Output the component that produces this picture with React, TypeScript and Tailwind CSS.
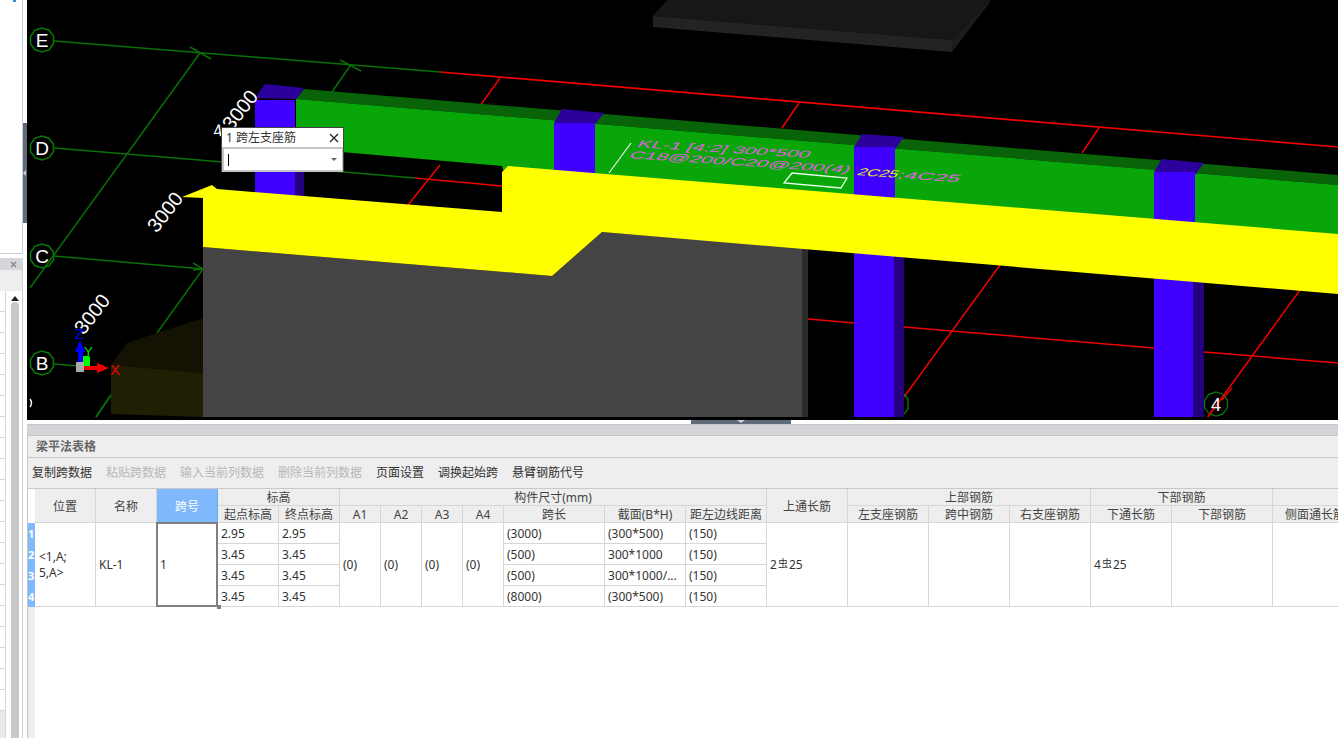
import React from "react";

const poly = (cx: number, cy: number, r: number, n = 10) =>
  Array.from({ length: n }, (_, i) => {
    const a = (i * 2 * Math.PI) / n + 0.3;
    return `${(cx + r * Math.cos(a)).toFixed(1)},${(cy + r * Math.sin(a)).toFixed(1)}`;
  }).join(" ");

const GREEN = "#087008";
const RED = "#f00000";

function Axis({ x, y, label }: { x: number; y: number; label: string }) {
  return (
    <g>
      <polygon points={poly(x, y, 12)} fill="none" stroke="#087808" strokeWidth="1.5" />
      <text x={x} y={y + 7} fill="#fff" fontSize="19" textAnchor="middle" fontFamily="Liberation Sans">
        {label}
      </text>
    </g>
  );
}

function Dim({ x, y }: { x: number; y: number }) {
  return (
    <text
      x={x}
      y={y}
      fill="#fff"
      fontSize="20"
      textAnchor="middle"
      dominantBaseline="central"
      fontFamily="Liberation Sans"
      transform={`rotate(-52 ${x} ${y})`}
    >
      3000
    </text>
  );
}

function Scene() {
  return (
    <svg width="1311" height="420" viewBox="27 0 1311 420" className="block">
      <rect x="27" y="0" width="1311" height="420" fill="#000" />
      {/* slab at the top */}
      <polygon points="667,0 990,0 952,40 653,16" fill="#171717" />
      <polygon points="653,16 952,40 952,52 653,27" fill="#232323" />
      <polygon points="952,40 990,0 990,2 952,52" fill="#1c1c1c" />

      {/* grid lines */}
      <g fill="none" strokeWidth="1.5">
        <path d="M54 41L440 72" stroke={GREEN} />
        <path d="M440 72L1338 147" stroke={RED} strokeWidth="1.7" />
        <path d="M30 288L200 53M190 47L211 59" stroke={GREEN} />
        <path d="M332 92L350 66M340 60L361 71" stroke={GREEN} />
        <path d="M54 148L415 178" stroke={GREEN} />
        <path d="M415 178L502 186" stroke={RED} />
        <path d="M54 256L203 269M193 263L203 269L193 270" stroke={GREEN} />
        <path d="M203 269L157 333M111 395L96 417" stroke={GREEN} />
        <path d="M54 364L78 366" stroke={GREEN} />
        <path d="M500 78L480 106M440 165L408 205" stroke={RED} />
        <path d="M799 103L782 128M1099 128L1082 153" stroke={RED} />
        <path d="M808 319L854 323M904 327L1154 348M1204 352L1338 363" stroke={RED} />
        <path d="M1000 265L904 397M1300 290L1208 417" stroke={RED} />
      </g>

      {/* olive block behind the wall */}
      <polygon points="111,365 127,343 157,333 203,318 203,373" fill="#141303" />
      <polygon points="111,365 203,373 203,417 111,414" fill="#201f03" />
      <path d="M111 395L96 417" stroke={GREEN} strokeWidth="1.5" />

      {/* lower columns */}
      <rect x="854" y="180" width="40" height="237" fill="#4000ff" />
      <rect x="894" y="180" width="10" height="237" fill="#25007f" />
      <rect x="1154" y="200" width="39" height="217" fill="#4000ff" />
      <rect x="1193" y="200" width="11" height="217" fill="#25007f" />
      <rect x="255" y="100" width="40" height="100" fill="#4000ff" />
      <rect x="295" y="140" width="9" height="60" fill="#25007f" />

      {/* beam */}
      <polygon points="296,99 304,89 1338,175 1338,185" fill="#096409" />
      <polygon points="296,99 1338,185 1338,260 508,185 502,166 296,148" fill="#08a608" />

      {/* column heads over the beam */}
      <polygon points="255,98 265,84 304,88 296,99" fill="#2b009b" />
      <polygon points="554,123 562,109 604,113 595,124" fill="#2b009b" />
      <rect x="554" y="123" width="41" height="60" fill="#4000ff" />
      <polygon points="854,147 862,134 904,137 895,149" fill="#2b009b" />
      <rect x="854" y="147" width="41" height="60" fill="#4000ff" />
      <polygon points="1154,172 1162,159 1204,163 1195,175" fill="#2b009b" />
      <rect x="1154" y="172" width="41" height="60" fill="#4000ff" />

      {/* wall */}
      <polygon points="203,247 552,276 602,232 802,248 802,417 203,417" fill="#444444" />
      <polygon points="802,248 808,249 808,417 802,417" fill="#2b2b2b" />

      {/* yellow band */}
      <polygon
        points="182,197 212,185 217,189 502,212 502,172 508,166 1338,234 1338,294 602,232 552,276 203,247 203,198"
        fill="#ffff00"
      />

      {/* annotation on the beam */}
      <path d="M631 143L609 173" stroke="#f2f2f2" strokeWidth="1.2" />
      <polygon points="784,183 792,173 847,178 841,188" fill="none" stroke="#e8ffe8" strokeWidth="1.3" />
      <g fontFamily="Liberation Sans" fontSize="10">
        <text transform="matrix(1 0.064 -0.7 1 636 147)" fill="#e060e0" textLength="172" lengthAdjust="spacingAndGlyphs">
          KL-1 [4:2] 300*500
        </text>
        <text transform="matrix(1 0.068 -0.7 1 628 158)" fill="#e060e0" textLength="220" lengthAdjust="spacingAndGlyphs">
          C18@200/C20@200(4)
        </text>
        <text transform="matrix(1 0.068 -0.7 1 856 175)" fill="#e4f020" textLength="40" lengthAdjust="spacingAndGlyphs">
          2C25
        </text>
        <text transform="matrix(1 0.068 -0.7 1 896 178)" fill="#e060e0" textLength="62" lengthAdjust="spacingAndGlyphs">
          ;4C25
        </text>
      </g>

      {/* axis bubbles and dimensions */}
      <Axis x={42} y={40} label="E" />
      <Axis x={42} y={148} label="D" />
      <Axis x={42} y={256} label="C" />
      <Axis x={42} y={363} label="B" />
      <polygon points={poly(1216, 404, 12)} fill="none" stroke="#087808" strokeWidth="1.3" />
      <path d="M1232 388L1222 400M1212 410L1208 417" stroke={RED} strokeWidth="1.3" />
      <text x="1216" y="411" fill="#fff" fontSize="18" textAnchor="middle" fontFamily="Liberation Sans">
        4
      </text>
      <path d="M904 394L908 399L908 409L904 414" fill="none" stroke="#087808" strokeWidth="1.3" />
      <Dim x={240} y={110} />
      <Dim x={165} y={212} />
      <Dim x={92} y={314} />
      <text x="214" y="137" fill="#fff" fontSize="17" fontFamily="Liberation Sans" transform="rotate(-8 214 137)">
        4
      </text>
      <path d="M30 399Q33 403 30 407" fill="none" stroke="#fff" strokeWidth="1.4" />

      {/* coordinate triad */}
      <rect x="82" y="356" width="8" height="14" rx="2" fill="#00ff00" />
      <rect x="78" y="351" width="5" height="12" fill="#0000ff" />
      <polygon points="80,340 75,352 85,352" fill="#0000ff" />
      <rect x="84" y="366" width="14" height="4" fill="#f00000" />
      <polygon points="97,363 109,368 97,373" fill="#f00000" />
      <rect x="76" y="362" width="8" height="10" fill="#aaaaaa" />
      <text x="75" y="339" fill="#0000ff" fontSize="15" fontFamily="Liberation Sans">Z</text>
      <text x="84" y="356" fill="#00e000" fontSize="13" fontFamily="Liberation Sans">Y</text>
      <text x="110" y="375" fill="#f00000" fontSize="15" fontFamily="Liberation Sans">X</text>
    </svg>
  );
}

function Popup() {
  return (
    <div className="absolute left-[194px] top-[127px] w-[123px] border border-[#444] border-b-0 bg-white text-[12px] leading-[17px] text-[#333]">
      <div className="flex h-[19px] items-center justify-between pl-[4px] pr-[3px]">
        <span>1 跨左支座筋</span>
        <svg width="10" height="10" viewBox="0 0 10 10" className="mr-[1px]">
          <path d="M1 1L9 9M9 1L1 9" stroke="#222" strokeWidth="1.3" />
        </svg>
      </div>
      <div className="flex h-[25px] items-center justify-between border-2 border-[#c4c4c4] border-r-[1px] pl-[4px] pr-[5px]">
        <span className="h-[12px] w-px bg-black" />
        <span className="h-0 w-0 border-x-[3px] border-t-[3px] border-x-transparent border-t-[#666]" />
      </div>
    </div>
  );
}

function LeftStrip() {
  const rows = Array.from({ length: 20 }, (_, i) => i);
  return (
    <div className="flex h-[738px] w-[23px] shrink-0 flex-col">
      <div className="relative h-[254px] shrink-0 border-b border-r border-[#cfcfcf] bg-white">
        <span className="absolute left-[13px] top-0 h-[2px] w-[3px] bg-[#2f8fd8]" />
      </div>
      <div className="h-[4px] shrink-0 bg-white" />
      <div className="flex flex-1 flex-col overflow-hidden border-r border-[#cfcfcf] bg-white">
        <div className="flex h-[12px] shrink-0 items-center justify-end bg-[#d5d6da] pr-[5px]">
          <svg width="7" height="7" viewBox="0 0 7 7">
            <path d="M1 1L6 6M6 1L1 6" stroke="#888" strokeWidth="1.4" />
          </svg>
        </div>
        <div className="h-[21px] shrink-0 bg-[#eeeeee]" />
        <div className="relative flex-1">
          <div className="w-[6px] border-r border-[#d8d8d8]">
            {rows.map((r) => (
              <div key={r} className="h-[21px] border-b border-[#d8d8d8]" />
            ))}
            <div className="h-[27px] bg-[#e8e8e8]" />
          </div>
          <div className="absolute left-[11px] top-[5px] h-0 w-0 border-x-[4px] border-b-[5px] border-x-transparent border-b-[#222]" />
          <div className="absolute bottom-0 left-[11px] top-[11px] w-[8px] rounded-t bg-[#c8c8c8]" />
        </div>
      </div>
    </div>
  );
}

const th = "border-b border-r border-[#d6d6d6] bg-[#eeeeee] p-0 pt-[2px] text-center font-normal leading-[14px] text-[#444] overflow-hidden whitespace-nowrap";
const td = "border-b border-r border-[#d6d6d6] bg-white px-[3px] py-0 text-left font-normal text-[#333] whitespace-nowrap overflow-hidden";
const tdRow = "border-b border-r border-[#d6d6d6] bg-white px-[3px] pb-0 pt-[1px] text-left font-normal text-[#333] whitespace-nowrap overflow-hidden";

const data = [
  ["2.95", "2.95", "(3000)", "(300*500)", "(150)"],
  ["3.45", "3.45", "(500)", "300*1000", "(150)"],
  ["3.45", "3.45", "(500)", "300*1000/...", "(150)"],
  ["3.45", "3.45", "(8000)", "(300*500)", "(150)"],
];

function Rebar({ n }: { n: string }) {
  return (
    <span>
      {n}
      <span className="relative top-[-2px] mx-[1px] text-[10px]">虫</span>
      25
    </span>
  );
}

function BeamTable() {
  const widths = [7, 61, 61, 61, 61, 61, 41, 41, 41, 41, 101, 81, 81, 81, 81, 81, 81, 81, 101, 85];
  return (
    <div className="relative flex-1 overflow-hidden border-l border-[#c4c4c4] bg-white">
      <div className="absolute bottom-0 left-0 top-0 w-[7px] bg-[#eeeeee]" />
      <table className="relative w-[1330px] table-fixed border-separate border-spacing-0 text-[12px] leading-[16px]">
        <colgroup>
          {widths.map((w, i) => (
            <col key={i} style={{ width: w }} />
          ))}
        </colgroup>
        <thead>
          <tr className="h-[17px]">
            <th rowSpan={2} className="bg-white p-0" />
            <th rowSpan={2} className={th}>位置</th>
            <th rowSpan={2} className={th}>名称</th>
            <th rowSpan={2} className="border-b border-r border-[#6aa9ee] bg-[#7fb9fb] p-0 pt-[2px] text-center font-normal leading-[14px] text-white">跨号</th>
            <th colSpan={2} className={th}>标高</th>
            <th colSpan={7} className={th}>构件尺寸(mm)</th>
            <th rowSpan={2} className={th}>上通长筋</th>
            <th colSpan={3} className={th}>上部钢筋</th>
            <th colSpan={2} className={th}>下部钢筋</th>
            <th className={th} />
          </tr>
          <tr className="h-[17px]">
            {["起点标高", "终点标高", "A1", "A2", "A3", "A4", "跨长", "截面(B*H)", "距左边线距离", "左支座钢筋", "跨中钢筋", "右支座钢筋", "下通长筋", "下部钢筋", "侧面通长筋"].map((t) => (
              <th key={t} className={th}>{t}</th>
            ))}
          </tr>
        </thead>
        <tbody>
          {data.map((r, i) => (
            <tr key={i} className="h-[21px]">
              <td className="bg-[#7fb9fb] p-0 text-left text-[11px] font-bold text-white">{i + 1}</td>
              {i === 0 && (
                <>
                  <td rowSpan={4} className={`${td} whitespace-normal pl-[4px]`}>
                    <div className="whitespace-pre">{"<1,A;\n5,A>"}</div>
                  </td>
                  <td rowSpan={4} className={td}>KL-1</td>
                  <td rowSpan={4} className={td}>1</td>
                </>
              )}
              <td className={tdRow}>{r[0]}</td>
              <td className={tdRow}>{r[1]}</td>
              {i === 0 && (
                <>
                  <td rowSpan={4} className={td}>(0)</td>
                  <td rowSpan={4} className={td}>(0)</td>
                  <td rowSpan={4} className={td}>(0)</td>
                  <td rowSpan={4} className={td}>(0)</td>
                </>
              )}
              <td className={tdRow}>{r[2]}</td>
              <td className={tdRow}>{r[3]}</td>
              <td className={tdRow}>{r[4]}</td>
              {i === 0 && (
                <>
                  <td rowSpan={4} className={td}><Rebar n="2" /></td>
                  <td rowSpan={4} className={td} />
                  <td rowSpan={4} className={td} />
                  <td rowSpan={4} className={td} />
                  <td rowSpan={4} className={td}><Rebar n="4" /></td>
                  <td rowSpan={4} className={td} />
                  <td rowSpan={4} className={td} />
                </>
              )}
            </tr>
          ))}
        </tbody>
      </table>
      {/* active cell frame */}
      <div className="pointer-events-none absolute left-[128px] top-[33px] h-[85px] w-[62px] border-2 border-[#808080]" />
      <div className="absolute left-[189px] top-[116px] h-[4px] w-[4px] bg-[#808080]" />
    </div>
  );
}

export default function App() {
  const tools: [string, boolean][] = [
    ["复制跨数据", true],
    ["粘贴跨数据", false],
    ["输入当前列数据", false],
    ["删除当前列数据", false],
    ["页面设置", true],
    ["调换起始跨", true],
    ["悬臂钢筋代号", true],
  ];
  return (
    <div className="flex h-[738px] w-[1338px] overflow-hidden bg-white font-['Noto_Sans','Noto_Sans_CJK_SC',sans-serif]">
      <LeftStrip />
      <div className="flex w-[4px] shrink-0 flex-col bg-white pt-[123px]">
        <div className="flex h-[100px] items-center bg-[#5f6b78]">
          <span className="h-0 w-0 border-y-[3px] border-r-[3px] border-y-transparent border-r-[#cfd3d8]" />
        </div>
      </div>
      <div className="flex w-[1311px] flex-col">
        <div className="relative h-[420px] shrink-0">
          <Scene />
          <Popup />
        </div>
        <div className="h-[4px] shrink-0 bg-white pl-[664px]">
          <div className="flex h-[4px] w-[100px] justify-center bg-[#5f6b78]">
            <span className="h-0 w-0 border-x-[4px] border-t-[3px] border-x-transparent border-t-[#cfd3d8]" />
          </div>
        </div>
        <div className="h-[12px] shrink-0 border-y border-[#c4c5c9] bg-[#d3d4d8]" />
        <div className="flex h-[22px] shrink-0 items-center border-b border-l border-[#c8c8c8] bg-[#eeeeee] pl-[8px] text-[12px] font-bold text-[#666]">
          梁平法表格
        </div>
        <div className="flex h-[31px] shrink-0 items-center gap-[14px] border-b border-l border-[#c8c8c8] bg-[#eeeeee] pl-[4px] text-[12px]">
          {tools.map(([t, on]) => (
            <span key={t} className={on ? "text-[#333]" : "text-[#b8b8b8]"}>{t}</span>
          ))}
        </div>
        <BeamTable />
      </div>
    </div>
  );
}
